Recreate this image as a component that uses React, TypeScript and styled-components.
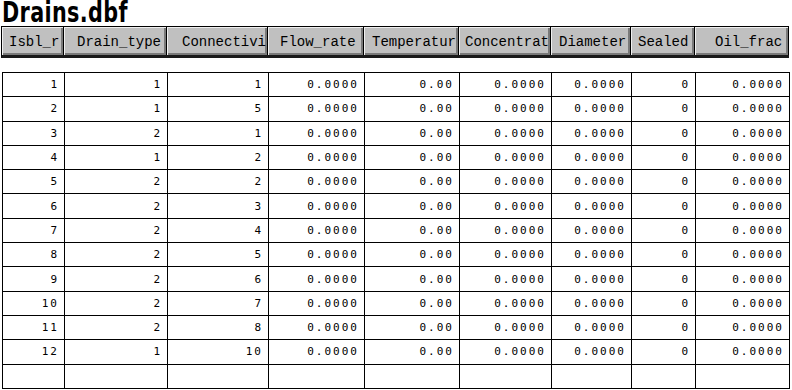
import React from 'react';
import styled, { createGlobalStyle } from 'styled-components';

const GlobalStyle = createGlobalStyle`
  html, body {
    margin: 0;
    padding: 0;
    background: #ffffff;
  }
`;

const Page = styled.div`
  width: 792px;
  height: 390px;
  padding-left: 2px;
  box-sizing: border-box;
  overflow: hidden;
  background: #ffffff;
`;

const TitleBar = styled.div`
  height: 26px;
  overflow: visible;
`;

const Title = styled.h1`
  display: inline-block;
  margin: 0;
  padding-top: 4px;
  font-family: 'DejaVu Sans', 'Liberation Sans', sans-serif;
  font-weight: bold;
  font-size: 28px;
  line-height: 18px;
  letter-spacing: 0.5px;
  color: #000000;
  transform: scaleX(0.74);
  transform-origin: left center;
`;

const HeaderRow = styled.div`
  display: flex;
  width: 787px;
  border-top: 1px solid #000000;
  border-bottom: 3px solid #1a1a1a;
  border-left: 1px solid #000000;
  box-sizing: content-box;
  margin-left: -1px;
`;

const HeaderCell = styled.div<{ $w: number; $pad: number }>`
  width: ${(p) => p.$w}px;
  height: 28px;
  box-sizing: border-box;
  padding-left: ${(p) => p.$pad}px;
  background: #c0c0c0;
  border-right: 1px solid #000000;
  box-shadow: inset 1px 1px 0 #f0f0f0, inset -2px -2px 0 #7a7a7a;
  font-family: 'Liberation Mono', 'Courier New', monospace;
  font-size: 14px;
  line-height: 30px;
  color: #000000;
  white-space: nowrap;
  overflow: hidden;
`;

const Grid = styled.table`
  margin-top: 14px;
  border-collapse: collapse;
  table-layout: fixed;
  width: 788px;
`;

const Row = styled.tr`
  height: 24.3px;
`;

const Cell = styled.td`
  border: 1px solid #000000;
  padding: 0 5px 0 0;
  text-align: right;
  font-family: 'DejaVu Sans Mono', monospace;
  font-size: 11px;
  letter-spacing: 2px;
  color: #000000;
  white-space: nowrap;
  overflow: hidden;
`;

const columns = [
  { name: 'Isbl_r', w: 62, pad: 7 },
  { name: 'Drain_type', w: 103, pad: 13 },
  { name: 'Connectivi', w: 101, pad: 15 },
  { name: 'Flow_rate', w: 96, pad: 12 },
  { name: 'Temperatur', w: 95, pad: 8 },
  { name: 'Concentrat', w: 92, pad: 6 },
  { name: 'Diameter', w: 80, pad: 8 },
  { name: 'Sealed', w: 64, pad: 7 },
  { name: 'Oil_frac', w: 94, pad: 20 },
];

const drains: [number, number, number][] = [
  [1, 1, 1],
  [2, 1, 5],
  [3, 2, 1],
  [4, 1, 2],
  [5, 2, 2],
  [6, 2, 3],
  [7, 2, 4],
  [8, 2, 5],
  [9, 2, 6],
  [10, 2, 7],
  [11, 2, 8],
  [12, 1, 10],
];

function App() {
  return (
    <Page>
      <GlobalStyle />
      <TitleBar>
        <Title>Drains.dbf</Title>
      </TitleBar>
      <HeaderRow>
        {columns.map((c) => (
          <HeaderCell key={c.name} $w={c.w} $pad={c.pad}>
            {c.name}
          </HeaderCell>
        ))}
      </HeaderRow>
      <Grid>
        <colgroup>
          {columns.map((c) => (
            <col key={c.name} style={{ width: c.w }} />
          ))}
        </colgroup>
        <tbody>
          {drains.map(([id, type, conn]) => (
            <Row key={id}>
              <Cell>{id}</Cell>
              <Cell>{type}</Cell>
              <Cell>{conn}</Cell>
              <Cell>0.0000</Cell>
              <Cell>0.00</Cell>
              <Cell>0.0000</Cell>
              <Cell>0.0000</Cell>
              <Cell>0</Cell>
              <Cell>0.0000</Cell>
            </Row>
          ))}
          <Row>
            {columns.map((c) => (
              <Cell key={c.name} />
            ))}
          </Row>
        </tbody>
      </Grid>
    </Page>
  );
}

export default App;
